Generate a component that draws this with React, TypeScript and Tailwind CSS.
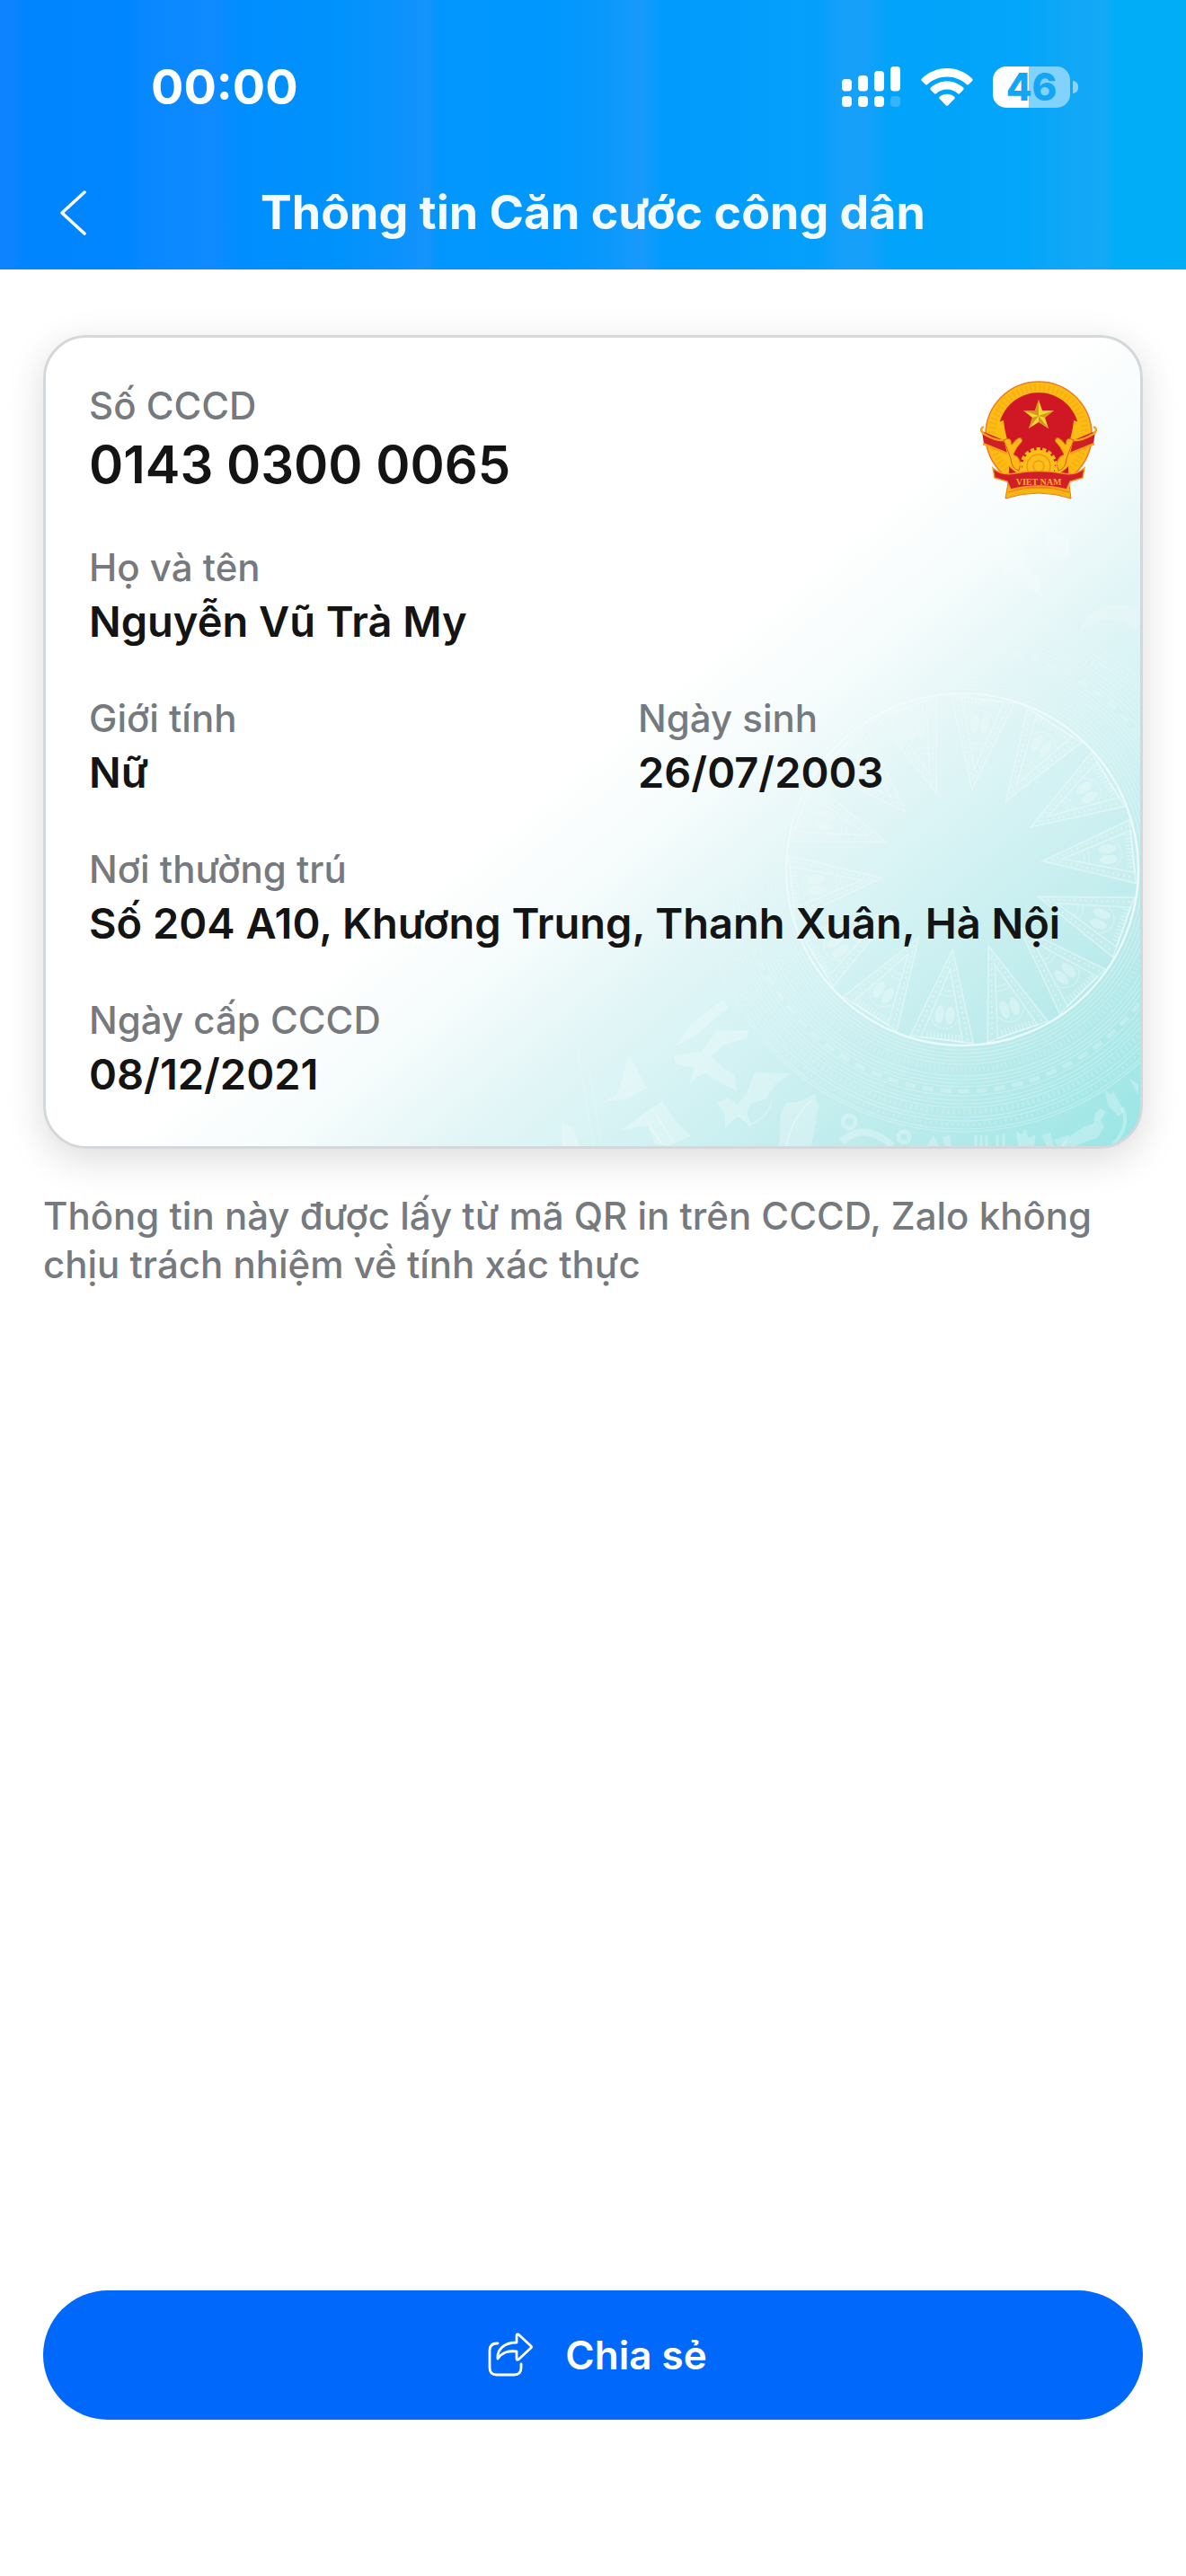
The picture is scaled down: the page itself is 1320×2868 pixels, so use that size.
import React from "react";

type FieldProps = { label: string; value: string; large?: boolean };

function Field({ label, value, large }: FieldProps) {
  return (
    <div className="min-w-0 flex-1">
      <dt className="text-[42px] leading-[56px] font-medium text-[#767a7f]">{label}</dt>
      <dd
        className={
          large
            ? "text-[58px] leading-[74px] font-semibold text-[#141415]"
            : "text-[47px] leading-[64px] font-semibold text-[#141415]"
        }
      >
        {value}
      </dd>
    </div>
  );
}

const polar = (r: number, deg: number) => {
  const a = (deg * Math.PI) / 180;
  return `${(r * Math.cos(a)).toFixed(1)},${(r * Math.sin(a)).toFixed(1)}`;
};

function DrumRay({ angle }: { angle: number }) {
  return (
    <g transform={`rotate(${angle})`}>
      <polygon points={`${polar(194, -10.5)} 90,0 ${polar(194, 10.5)}`} fill="#fff" fillOpacity="0.1" strokeWidth="1.8" />
      <polygon points={`${polar(192, -7)} 112,0 ${polar(192, 7)}`} strokeWidth="1.6" />
      <path d={`M${polar(190, -8.8)} L100,0 L${polar(190, 8.8)}`} strokeWidth="2" strokeDasharray="2 4" />
      <path d="M140 -8 A18 18 0 0 1 140 8 M135 -6 A14 14 0 0 1 135 6" strokeWidth="1.2" strokeOpacity="0.3" />
      <ellipse cx="163" cy="-6" rx="10" ry="5" fill="#fff" fillOpacity="0.32" stroke="none" />
      <ellipse cx="163" cy="6" rx="10" ry="5" fill="#fff" fillOpacity="0.32" stroke="none" />
      <path d="M168 -15 A16 16 0 0 1 168 15" strokeWidth="1.2" strokeOpacity="0.3" />
      <path d="M187 -20 V20" strokeWidth="7" strokeDasharray="1.5 2.5" strokeOpacity="0.35" />
    </g>
  );
}

const rings = [201, 205, 209, 213, 217, 230, 234, 238, 257, 261, 265, 276, 280, 289, 292];

function DrumPattern() {
  return (
    <svg
      aria-hidden="true"
      className="pointer-events-none absolute right-0 bottom-0 h-[899px] w-[700px]"
      viewBox="0 0 700 899"
      fill="none"
    >
      <defs>
        <linearGradient id="drumFade" gradientUnits="userSpaceOnUse" x1="250" y1="400" x2="640" y2="800">
          <stop offset="0" stopColor="#fff" stopOpacity="0.15" />
          <stop offset="0.5" stopColor="#fff" stopOpacity="0.75" />
          <stop offset="1" stopColor="#fff" />
        </linearGradient>
        <mask id="drumMask" maskUnits="userSpaceOnUse" x="0" y="0" width="700" height="899">
          <rect width="700" height="899" fill="url(#drumFade)" />
        </mask>
      </defs>
      <g mask="url(#drumMask)">
        <g transform="translate(502 591)" stroke="#fff" strokeOpacity="0.4">
          {Array.from({ length: 14 }, (_, i) => (
            <DrumRay key={i} angle={-6 + (i * 360) / 14} />
          ))}
          <circle r="196" strokeWidth="2.500" strokeOpacity="0.75" />
          {rings.map((r) => (
            <circle key={r} r={r} strokeWidth="1.200" strokeOpacity="0.28" />
          ))}
          <circle r="223" strokeWidth="7" strokeDasharray="2 3" strokeOpacity="0.15" />
          <circle r="242" strokeWidth="1.200" strokeOpacity="0.3" />
          <circle r="247" strokeWidth="5" strokeDasharray="12 8" strokeOpacity="0.24" />
          <circle r="252" strokeWidth="1.200" strokeOpacity="0.3" />
          <circle r="270" strokeWidth="6" strokeDasharray="3 3" strokeOpacity="0.15" />
          <circle r="284" strokeWidth="3" strokeDasharray="2 4" strokeOpacity="0.2" />
        </g>
      </g>
      <g fill="#fff" fillOpacity="0.26">
        <path d="M184 787 L200 762 L236 736 L241 745 L206 776Z" />
        <path d="M228 771 L264 770 L262 779 L236 787 L222 799 L232 808 L248 820 L251 837 L236 830 L216 818 L206 822 L198 831 L204 812 L184 808 L180 798 L212 794Z" />
        <path d="M271 817 L311 818 L294 830 L284 846 L266 852 L262 862 L268 878 L252 866 L238 878 L238 864 L229 850 L242 845 L252 853 L262 840Z" />
        <path d="M338 841 L342 856 L334 899 L298 899 L300 862 L306 851 L318 850Z" />
        <path d="M118 841 L131 797 L142 818 L151 834 L130 846 L102 850Z" />
        <path d="M122 881 L146 864 L168 849 L182 870 L200 888 L176 899 L160 897 L152 876Z" />
        <path d="M56 872 L70 880 L76 899 L56 899Z" />
        <path d="M462 899 L470 887 L476 899Z M482 899 L480 889 L488 887 L490 899Z" />
        <path d="M564 899 L562 882 L568 886 L572 880 L576 890 L584 886 L582 899Z M590 887 L600 884 L604 899 L596 899Z M608 899 L604 892 L622 886 L616 899Z" />
        <path d="M618 891 L636 878 L648 874 L650 862 L656 857 L662 861 L656 870 L660 878 L652 890 L640 894 L628 899 L612 899Z" />
        <path d="M661 836 L667 842 L670 838 L682 860 L676 866 L664 854Z M688 824 L698 830 L698 842Z" />
      </g>
      <g stroke="#fff" strokeOpacity="0.28">
        <circle cx="376" cy="872" r="7" strokeWidth="5" />
        <circle cx="437" cy="889" r="6" strokeWidth="5" />
        <path d="M368 894 Q386 878 404 886 Q416 890 424 899" strokeWidth="8" />
        <path d="M517 887 V899 M523 887 V899 M529 887 V899 M541 887 V899 M548 885 V899" strokeWidth="3" />
        <path d="M680 856 Q690 878 668 899" strokeWidth="4" />
        <path d="M306 899 Q312 868 334 848 M264 876 Q288 866 290 848 M150 870 L168 897 M160 862 L180 894" strokeWidth="2" />
        <path d="M74 790 L92 899 M84 800 L100 894" strokeOpacity="0.15" strokeWidth="2" />
      </g>
      <g fill="#fff" fillOpacity="0.18">
        <path d="M440 228 L446 210 L454 222 L452 246 L442 250Z M466 206 L476 216 L478 228 L468 224Z" />
        <path d="M540 214 L554 232 L576 240 L570 252 L588 270 L592 288 L584 284 L562 262 L548 262Z" />
        <path d="M594 212 L622 222 L620 244 L598 240Z" />
        <path d="M632 326 Q646 288 698 300 L698 326 L676 312 L654 314Z" />
      </g>
    </svg>
  );
}

function Emblem() {
  return (
    <svg role="img" aria-label="Quốc huy Việt Nam" viewBox="0 0 130 132" className="h-[132px] w-[130px] shrink-0">
      <path d="M32 108 L98 108 L101 131 Q65 119 28 131Z" fill="#f8b512" stroke="#e8791c" strokeWidth="1" />
      <path d="M31 124 Q65 113 99 124" fill="none" stroke="#e8791c" strokeWidth="1" />
      <circle cx="65" cy="60" r="59" fill="#fcbc14" stroke="#ee7d22" strokeWidth="1.600" />
      <circle cx="65" cy="60" r="52" fill="none" stroke="#f5a013" strokeWidth="8" strokeDasharray="2 3" strokeOpacity="0.45" />
      <circle cx="65" cy="58" r="45" fill="#d01825" />
      <path d="M32 70 H98 V104 H32Z" fill="#d01825" />
      <path d="M65 21 l4 12 h13 l-10 8 4 12 -11 -7 -11 7 4 -12 -10 -8 h13z" fill="#f7d431" />
      <path d="M65 21 v18 l-4 -6z M82 33 l-17 6 7 2z M76 53 l-11 -14 0 7z M54 53 l11 -14 -7 2z M48 33 l17 6 -4 -6z" fill="#d19a1c" />
      <path d="M20 46 C14 76 28 98 48 106 L46 94 C36 84 28 66 26 44Z M110 46 C116 76 102 98 82 106 L84 94 C94 84 102 66 104 44Z" fill="#fcbc14" />
      <path d="M2 56 L26 66 L30 80 L4 70Z M128 56 L104 66 L100 80 L126 70Z" fill="#d01f27" />
      <path d="M4 51 Q-2 54 4 59 Q18 68 30 66 M3 70 L30 81 M126 51 Q132 54 126 59 Q112 68 100 66 M127 70 L100 81" fill="none" stroke="#f6a21a" strokeWidth="2.500" />
      <path d="M26 66 q9 -5 9 5 q10 -13 12 -4 q-7 7 -10 15 q11 4 6 18 q-8 -2 -9 -13 q-4 -12 -8 -21z M104 66 q-9 -5 -9 5 q-10 -13 -12 -4 q7 7 10 15 q-11 4 -6 18 q8 -2 9 -13 q4 -12 8 -21z" fill="#fbb916" stroke="#e0561f" strokeWidth="1" />
      <circle cx="65" cy="95" r="18" fill="#fcbf19" stroke="#fcbf19" strokeWidth="6" strokeDasharray="4 2.300" />
      <circle cx="65" cy="95" r="13" fill="none" stroke="#ef9a18" strokeWidth="1.500" />
      <circle cx="65" cy="95" r="6" fill="none" stroke="#ef9a18" strokeWidth="1.500" />
      <path d="M14 97 Q24 106 38 103 Q65 98 92 103 Q106 106 116 97 L114 108 L100 112 L96 121 Q65 113 34 121 L30 112 L16 108Z" fill="#d01f27" stroke="#f39a1b" strokeWidth="1.400" />
      <text x="65" y="116" textAnchor="middle" fontSize="10" fontWeight="700" fontFamily="Liberation Serif, serif" fill="#f9b81a">
        VIET NAM
      </text>
    </svg>
  );
}

function StatusIcons() {
  return (
    <div className="flex items-center gap-[22px] text-white">
      <svg aria-label="Sóng di động" role="img" viewBox="0 0 66 46" className="h-[46px] w-[66px]" fill="currentColor">
        <rect x="0" y="14" width="11" height="13.500" rx="4" />
        <rect x="18" y="10" width="11" height="17.500" rx="4" />
        <rect x="36" y="5" width="11" height="22.500" rx="4" />
        <rect x="54" y="0" width="11" height="27.500" rx="4" />
        <rect x="0" y="33" width="11" height="12" rx="4" />
        <rect x="18" y="33" width="11" height="12" rx="4" />
        <rect x="36" y="33" width="11" height="12" rx="4" />
        <rect x="54" y="33" width="11" height="12" rx="4" fillOpacity="0.2" />
      </svg>
      <svg aria-label="Wi-Fi" role="img" viewBox="0 0 58 44" className="h-[44px] w-[58px]" fill="currentColor">
        <path d="M29 1 C18 1 8 5.500 1 12.500 Q-.2 14 1 15.200 L5 19 Q6 20 7.200 19 C13 13.500 21 10.500 29 10.500 C37 10.500 45 13.500 50.800 19 Q52 20 53 19 L57 15.200 Q58.200 14 57 12.500 C50 5.500 40 1 29 1Z" />
        <path d="M29 15.500 C22 15.500 15.500 18.200 10.800 22.600 Q9.800 23.800 10.800 25 L14.800 29 Q16 30 17.200 29 C20.300 26.200 24.500 24.500 29 24.500 C33.500 24.500 37.700 26.200 40.800 29 Q42 30 43.200 29 L47.200 25 Q48.200 23.800 47.200 22.600 C42.500 18.200 36 15.500 29 15.500Z" />
        <path d="M29 29.800 C25.800 29.800 22.900 31 20.700 32.800 Q19.700 34 20.700 35 L27.800 42.200 Q29 43.400 30.200 42.200 L37.300 35 Q38.300 34 37.300 32.800 C35.100 31 32.200 29.800 29 29.800Z" />
      </svg>
      <div className="flex items-center gap-[3px]">
        <div className="flex h-[46px] w-[86px] items-center justify-center rounded-[15px] bg-linear-to-r from-white from-46% to-[#82d3fb] to-46% text-[42px] leading-none font-extrabold text-[#12a6f5]">
          46
        </div>
        <div className="h-[14px] w-[6px] rounded-r-full bg-white/50" />
      </div>
    </div>
  );
}

export default function App() {
  return (
    <div className="flex min-h-screen flex-col bg-white font-['Inter',sans-serif]">
      <header className="bg-[linear-gradient(90deg,#0e83ff_0%,#0d83ff_1%,#0085ff_2%,#0086ff_11%,#0888ff_12%,#108aff_18%,#008eff_20%,#0092fc_28%,#0a92fc_33%,#1593fb_36%,#0096fe_37%,#0098fe_46%,#0a98fb_51%,#189afb_54%,#009bfd_56%,#059ffb_69%,#16a0fa_71%,#17a0fa_73%,#02a3fb_75%,#02a6fa_86%,#10a7f7_90%,#15a9f7_93%,#00adf6_94%,#00aef6_100%)]">
        <div className="flex items-center justify-between pt-[64px] pr-[120px] pl-[168px]">
          <time className="text-[54px] leading-[66px] font-bold text-white">00:00</time>
          <StatusIcons />
        </div>
        <div className="grid grid-cols-[88px_1fr_88px] items-center px-[40px] pt-[65px] pb-[21px]">
          <button type="button" aria-label="Quay lại" className="flex size-[84px] items-center justify-center text-white">
            <svg viewBox="0 0 32 52" className="h-[52px] w-[32px]" fill="none" stroke="currentColor" strokeWidth="3.500" strokeLinecap="round" strokeLinejoin="round">
              <path d="M28 3 L3 26 L28 49" />
            </svg>
          </button>
          <h1 className="text-center text-[52px] leading-[64px] font-bold whitespace-nowrap text-[#f4fafe]">
            Thông tin Căn cước công dân
          </h1>
        </div>
      </header>

      <main className="flex flex-1 flex-col px-[48px] pt-[73px] pb-[174px]">
        <section className="relative overflow-hidden rounded-[48px] border-3 border-[#d5d8da] bg-[linear-gradient(140deg,#fff_50%,#f6fcfc_58%,#e4f6f7_66%,#d3f2f3_75%,#bcebec_87%,#98e5e5_100%)] p-[48px] shadow-[0_12px_44px_rgba(0,0,0,0.14)]">
          <DrumPattern />
          <dl className="relative flex flex-col gap-[48px]">
            <div className="flex items-start justify-between">
              <Field label="Số CCCD" value="0143 0300 0065" large />
              <Emblem />
            </div>
            <Field label="Họ và tên" value="Nguyễn Vũ Trà My" />
            <div className="flex gap-[100px]">
              <Field label="Giới tính" value="Nữ" />
              <Field label="Ngày sinh" value="26/07/2003" />
            </div>
            <Field label="Nơi thường trú" value="Số 204 A10, Khương Trung, Thanh Xuân, Hà Nội" />
            <Field label="Ngày cấp CCCD" value="08/12/2021" />
          </dl>
        </section>
        <p className="mt-[48px] text-[42px] leading-[54px] font-medium text-[#767a7f]">
          Thông tin này được lấy từ mã QR in trên CCCD, Zalo không chịu trách nhiệm về tính xác thực
        </p>
        <button
          type="button"
          className="mt-auto flex h-[144px] w-full items-center justify-center gap-[36px] rounded-full bg-[#0068fa] pl-[10px] text-[44px] font-semibold text-white"
        >
          <svg aria-hidden="true" viewBox="0 0 50 50" className="size-[50px]" fill="none" stroke="currentColor" strokeWidth="2.800" strokeLinecap="round" strokeLinejoin="round">
            <path d="M11 12 H10 Q2 12 2 20 V39 Q2 47 10 47 H29 Q37 47 37 39 V35" />
            <path d="M33 2 Q32 2 32 4 V11 C19 11 10 18 11 29 C16 22 22 20 32 21 V29 Q32 31 34 30 L48 17 Q49 16 48 15 L34 2 Z" />
          </svg>
          Chia sẻ
        </button>
      </main>
    </div>
  );
}
